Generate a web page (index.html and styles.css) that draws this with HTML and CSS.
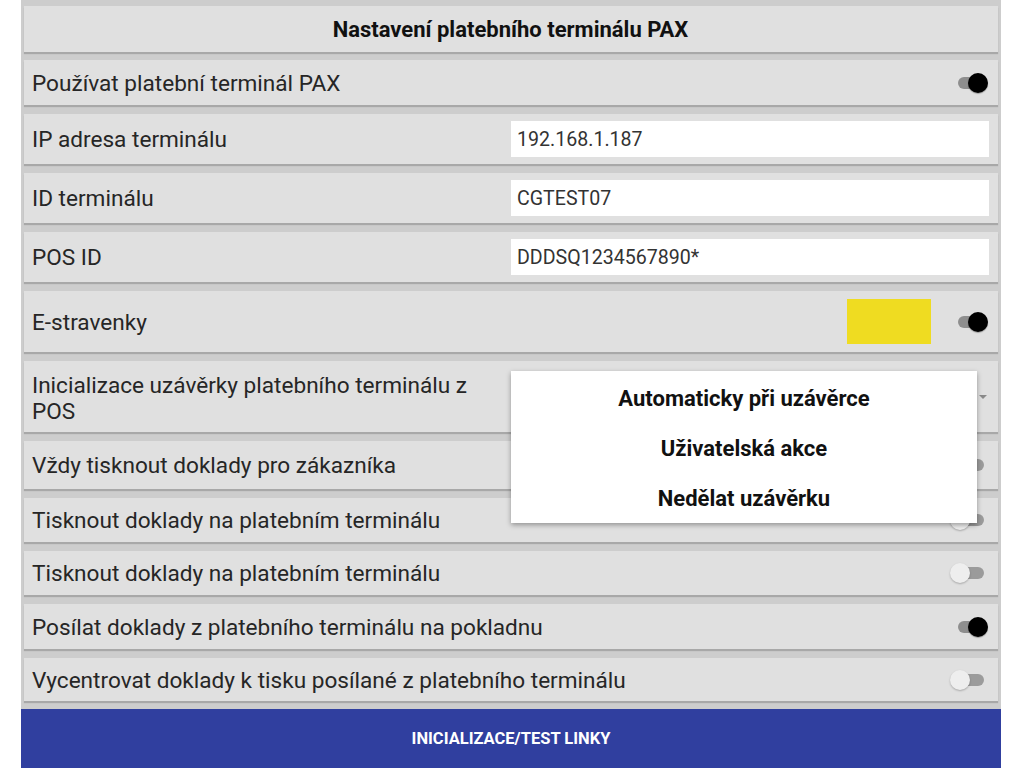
FILE: index.html
```html
<!DOCTYPE html>
<html lang="cs">
<head>
<meta charset="utf-8">
<title>Nastavení platebního terminálu PAX</title>
<link rel="stylesheet" href="styles.css">
</head>
<body>
<div class="panel">
  <div class="row header">Nastavení platebního terminálu PAX</div>
  <div class="row r45">
    <span class="label">Používat platební terminál PAX</span>
    <span class="toggle on"><span class="track"></span><span class="knob"></span></span>
  </div>
  <div class="row r50">
    <span class="label">IP adresa terminálu</span>
    <span class="input">192.168.1.187</span>
  </div>
  <div class="row r50">
    <span class="label">ID terminálu</span>
    <span class="input">CGTEST07</span>
  </div>
  <div class="row r50">
    <span class="label">POS ID</span>
    <span class="input">DDDSQ1234567890*</span>
  </div>
  <div class="row r61">
    <span class="label">E-stravenky</span>
    <span class="swatch"></span>
    <span class="toggle on"><span class="track"></span><span class="knob"></span></span>
  </div>
  <div class="row r71">
    <span class="label wrap">Inicializace uzávěrky platebního terminálu z POS</span>
    <span class="arrow"></span>
  </div>
  <div class="row r48">
    <span class="label">Vždy tisknout doklady pro zákazníka</span>
    <span class="toggle"><span class="track"></span><span class="knob"></span></span>
  </div>
  <div class="row r44">
    <span class="label">Tisknout doklady na platebním terminálu</span>
    <span class="toggle"><span class="track"></span><span class="knob"></span></span>
  </div>
  <div class="row r44">
    <span class="label">Tisknout doklady na platebním terminálu</span>
    <span class="toggle"><span class="track"></span><span class="knob"></span></span>
  </div>
  <div class="row r45">
    <span class="label">Posílat doklady z platebního terminálu na pokladnu</span>
    <span class="toggle on"><span class="track"></span><span class="knob"></span></span>
  </div>
  <div class="row r43">
    <span class="label">Vycentrovat doklady k tisku posílané z platebního terminálu</span>
    <span class="toggle"><span class="track"></span><span class="knob"></span></span>
  </div>
  <div class="button">INICIALIZACE/TEST LINKY</div>

  <div class="popup">
    <div class="opt">Automaticky při uzávěrce</div>
    <div class="opt">Uživatelská akce</div>
    <div class="opt">Nedělat uzávěrku</div>
  </div>
</div>
</body>
</html>
```
FILE: styles.css
```css
html, body {
  margin: 0;
  padding: 0;
  background: #ffffff;
  height: 768px;
  overflow: hidden;
}
body {
  font-family: Roboto, "Noto Sans", "Liberation Sans", sans-serif;
  color: #1f1f1f;
}
.panel {
  position: relative;
  margin-left: 21px;
  width: 980px;
  height: 768px;
  background: #cdcdcd;
  padding-top: 6px;
  box-sizing: border-box;
  display: flex;
  flex-direction: column;
  gap: 9px;
}
.row {
  margin: 0 3px;
  background: #e0e0e0;
  box-shadow: 0 2px 1px rgba(0,0,0,0.18);
  display: flex;
  align-items: center;
  padding: 0 9px 0 8px;
  box-sizing: border-box;
  flex: none;
}
.header {
  height: 46px;
  justify-content: center;
  font-weight: 700;
  font-size: 22px;
  color: #111;
  margin-bottom: -1px;
}
.r43 { height: 43px; }
.r44 { height: 44px; }
.r45 { height: 45px; }
.r48 { height: 48px; }
.r50 { height: 50px; }
.r61 { height: 61px; }
.r71 { height: 71px; }
.label {
  flex: 1;
  font-size: 22.6px;
  line-height: 26px;
  color: #262626;
  white-space: nowrap;
  padding-top: 2px;
}
.label.wrap {
  white-space: normal;
  max-width: 460px;
  flex: none;
  margin-top: 2px;
}
.input {
  width: 478px;
  height: 36px;
  background: #ffffff;
  box-sizing: border-box;
  padding-left: 6px;
  display: flex;
  align-items: center;
  font-size: 19.6px;
  color: #333;
}
.swatch {
  width: 84px;
  height: 45px;
  background: #efdc21;
  margin-right: 19px;
}
.toggle {
  position: relative;
  width: 38px;
  height: 22px;
  margin-right: 1px;
  flex: none;
}
.track {
  position: absolute;
  left: 7px;
  top: 5px;
  width: 27px;
  height: 12px;
  border-radius: 6px;
  background: #9b9b9b;
}
.knob {
  position: absolute;
  left: 0;
  top: 1px;
  width: 20px;
  height: 20px;
  border-radius: 50%;
  background: #eeeeee;
  box-shadow: 0 1px 2px rgba(0,0,0,0.25);
}
.toggle.on .track { background: #8e8e8e; left: 8px; }
.toggle.on .knob { left: 18px; background: #000; box-shadow: 0 1px 1px rgba(0,0,0,0.3); }
.arrow {
  margin-left: auto;
  margin-right: 2px;
  width: 0;
  height: 0;
  border-left: 4px solid transparent;
  border-right: 4px solid transparent;
  border-top: 4px solid #8a8a8a;
}
.button {
  background: #303f9f;
  color: #ffffff;
  font-weight: 700;
  font-size: 16.5px;
  height: 60px;
  display: flex;
  align-items: center;
  justify-content: center;
  margin-top: -1px;
}
.popup {
  position: absolute;
  left: 490px;
  top: 371px;
  width: 466px;
  height: 152px;
  background: #ffffff;
  box-shadow: 0 2px 5px rgba(0,0,0,0.35);
  display: flex;
  flex-direction: column;
  padding-top: 2px;
  box-sizing: border-box;
}
.opt {
  height: 50px;
  display: flex;
  align-items: center;
  justify-content: center;
  font-weight: 700;
  font-size: 22px;
  color: #111;
}
```
